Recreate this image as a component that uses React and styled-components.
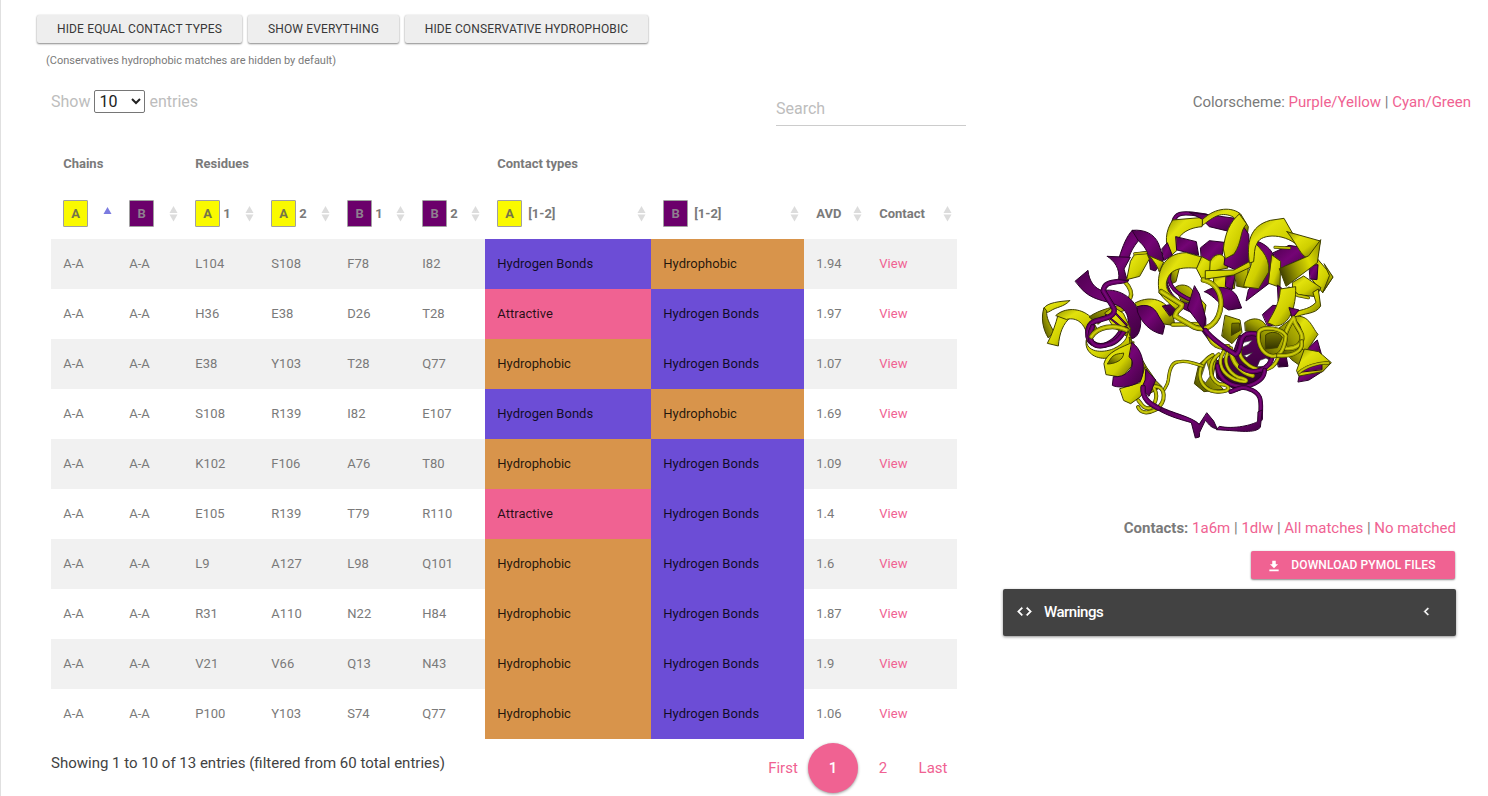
import React from "react";
import styled, { createGlobalStyle, css } from "styled-components";

const PINK = "#f06292";

const GlobalStyle = createGlobalStyle`
  * { box-sizing: border-box; }
  body {
    margin: 0;
    background: #fff;
    color: #7a7a7a;
    font-family: Roboto, "Liberation Sans", sans-serif;
    font-size: 15px;
    overflow: hidden;
  }
`;

const Page = styled.div`
  display: flex;
  height: 796px;
  border-left: 1px solid #e0e0e0;
`;

const Matches = styled.main`
  width: 965px;
  padding: 15px 0 0 36px;
`;

const Toolbar = styled.div`
  display: flex;
  gap: 6px;
`;

const Button = styled.button`
  display: flex;
  align-items: center;
  justify-content: center;
  width: ${(p) => p.$width}px;
  height: 28px;
  padding: ${(p) => (p.$primary ? "0 3px 0 0" : "0")};
  border: 0;
  border-radius: 2px;
  background: ${(p) => (p.$primary ? PINK : "#eeeeee")};
  color: ${(p) => (p.$primary ? "#fff" : "#383838")};
  font: ${(p) => (p.$primary ? 500 : 400)} 12px/28px Roboto, sans-serif;
  letter-spacing: ${(p) => (p.$primary ? 0.12 : 0.14)}px;
  text-transform: uppercase;
  white-space: nowrap;
  box-shadow: 0 1px 2px rgba(0, 0, 0, 0.45), 0 0 2px rgba(0, 0, 0, 0.1);
`;

const Hint = styled.p`
  margin: 10px 0 0 9px;
  font-size: 11px;
  line-height: 16px;
`;

const Controls = styled.div`
  display: flex;
  justify-content: space-between;
  width: 915px;
  height: 70px;
  margin: 0 0 0 14px;
  color: #bdbdbd;
  font-size: 16px;
`;

const Length = styled.label`
  display: flex;
  align-items: center;
  gap: 4px;
  height: 23px;
  margin-top: 21px;
`;

const LengthSelect = styled.select`
  width: 51px;
  height: 23px;
  padding: 0;
  border: 1px solid #767676;
  border-radius: 2px;
  background: #fff;
  color: #212121;
  font: 16px Roboto, sans-serif;
`;

const SearchInput = styled.input`
  width: 190px;
  height: 35px;
  margin-top: 22px;
  padding: 0;
  border: 0;
  border-bottom: 1px solid #ccc;
  outline: 0;
  font: 16px Roboto, sans-serif;
  &::placeholder { color: #bdbdbd; opacity: 1; }
`;

const Table = styled.table`
  width: 906px;
  margin-left: 14px;
  border-collapse: collapse;
  table-layout: fixed;
  font-size: 13px;
  line-height: 20px;
`;

const Row = styled.tr`
  height: 50px;
  background: ${(p) => (p.$striped ? "#f1f1f1" : "#fff")};
`;

const GroupHead = styled.th`
  padding: 0 12.2px;
  text-align: left;
  font-weight: 700;
`;

const Head = styled.th`
  padding: 0 5px 0 12.2px;
  text-align: left;
  font-weight: 700;
`;

const HeadContent = styled.div`
  display: flex;
  align-items: center;
  gap: ${(p) => p.$gap}px;
`;

const Chain = styled.span`
  width: 25px;
  height: 27px;
  margin-bottom: 1px;
  border: 1px solid #a0a0a0;
  border-radius: 1px;
  background: ${(p) => (p.$name === "A" ? "#fafa00" : "#6b006b")};
  color: ${(p) => (p.$name === "A" ? "#757548" : "#8f7f8f")};
  line-height: 25px;
  text-align: center;
`;

const SortIcon = styled.svg`
  margin-left: auto;
  width: 9px;
  height: 16px;
`;

const contactColors = {
  "Hydrogen Bonds": "#6c4dd6",
  Hydrophobic: "#d8944b",
  Attractive: PINK,
};

const Cell = styled.td`
  padding: 0 12.3px;
  ${(p) =>
    p.$contact &&
    css`
      background: ${contactColors[p.$contact]};
      color: rgba(0, 0, 0, 0.85);
      letter-spacing: 0.01px;
    `}
`;

const Link = styled.a`
  color: ${PINK};
  cursor: pointer;
`;

const TableFooter = styled.div`
  display: flex;
  justify-content: space-between;
  width: 907px;
  margin: 4px 0 0 14px;
`;

const Info = styled.div`
  padding-top: 10px;
  color: #424242;
  line-height: 20px;
`;

const Pager = styled.div`
  display: flex;
`;

const PageLink = styled.a`
  width: 50px;
  height: 50px;
  border-radius: 50%;
  color: ${PINK};
  line-height: 50px;
  text-align: center;
  ${(p) =>
    p.$current &&
    css`
      background: ${PINK};
      color: #fff;
      font-weight: 500;
      box-shadow: 0 1px 3px rgba(0, 0, 0, 0.4);
    `}
`;

const Structure = styled.aside`
  display: flex;
  flex-direction: column;
  align-items: flex-end;
  width: 505px;
  padding-top: 92px;
`;

const Scheme = styled.div`
  text-align: right;
  line-height: 20px;
  white-space: nowrap;
`;

const Viewer = styled.div`
  width: 453px;
  height: 406px;
  margin-right: 15px;
  padding: 88px 0 0 27px;
`;

const SidePanel = styled.div`
  display: flex;
  flex-direction: column;
  align-items: flex-end;
  width: 453px;
  margin-right: 15px;
`;

const Contacts = styled.div`
  margin-bottom: 13px;
  line-height: 20px;
`;

const DownloadRow = styled.div`
  padding-right: 1px;
`;

const ButtonIcon = styled.svg`
  width: 14px;
  height: 14px;
  margin: 1px 10px 0 0;
`;

const Warnings = styled.button`
  display: flex;
  align-items: center;
  width: 453px;
  height: 47px;
  margin-top: 10px;
  padding: 0 22px 2px 13px;
  border: 0;
  border-radius: 2px;
  background: #424242;
  color: #fff;
  font: 500 15px Roboto, sans-serif;
  letter-spacing: -0.5px;
  box-shadow: 0 1px 3px rgba(0, 0, 0, 0.45);
  span { flex: 1; margin-left: 11px; text-align: left; }
`;

function Sort({ active }) {
  return (
    <SortIcon viewBox="0 0 9 16">
      <path d={active ? "M4.5 1 8.5 8h-8z" : "M4.5 0 8.5 7h-8z"} fill={active ? "#7b7be0" : "#dcdcdc"} />
      {!active && <path d="M4.5 15.5.5 8.5h8z" fill="#dcdcdc" />}
    </SortIcon>
  );
}

const columns = [
  { width: 66, chain: "A", active: true },
  { width: 66, chain: "B" },
  { width: 76, chain: "A", label: "1" },
  { width: 76, chain: "A", label: "2" },
  { width: 75, chain: "B", label: "1" },
  { width: 75, chain: "B", label: "2" },
  { width: 166, chain: "A", label: "[1-2]" },
  { width: 153, chain: "B", label: "[1-2]" },
  { width: 63, label: "AVD" },
  { width: 90, label: "Contact" },
];

const HB = "Hydrogen Bonds";
const HP = "Hydrophobic";
const AT = "Attractive";

const rows = [
  ["L104", "S108", "F78", "I82", HB, HP, "1.94"],
  ["H36", "E38", "D26", "T28", AT, HB, "1.97"],
  ["E38", "Y103", "T28", "Q77", HP, HB, "1.07"],
  ["S108", "R139", "I82", "E107", HB, HP, "1.69"],
  ["K102", "F106", "A76", "T80", HP, HB, "1.09"],
  ["E105", "R139", "T79", "R110", AT, HB, "1.4"],
  ["L9", "A127", "L98", "Q101", HP, HB, "1.6"],
  ["R31", "A110", "N22", "H84", HP, HB, "1.87"],
  ["V21", "V66", "Q13", "N43", HP, HB, "1.9"],
  ["P100", "Y103", "S74", "Q77", HP, HB, "1.06"],
];

const tubeTones = {
  y: ["#2e2e00", "#a5a500", "#d2d210"],
  p: ["#1c001c", "#5c005d", "#780679"],
};

// Ribbon and tube segments, listed from the back of the molecule to the front.
const segments = [
  // left terminal strand
  ["y", "M119 302C88 304 53 308 42 324C36 336 48 342 61 333C80 320 101 322 119 302Z"],
  ["yd", "M42 324C32 350 38 388 55 414L72 396C59 372 48 352 50 334Z"],
  ["y", "M84 345C77 372 67 402 52 430L85 438C88 400 99 370 122 352Z"],
  ["y", "M78 346C102 323 150 321 182 351L203 390L172 408C165 372 142 350 110 358Z"],
  ["yd", "M178 350C210 328 250 320 300 309L304 325C255 340 232 348 205 372Z"],
  ["yt", "M284 244C300 262 307 280 301 293C290 304 270 303 252 310", 10],
  ["p", "M136 243L174 211C177 244 194 266 218 272C270 262 326 300 332 360C334 390 322 415 304 416L290 384C302 352 288 328 262 316C224 300 184 302 152 264Z"],
  ["y", "M225 338L250 320L280 340L302 386L298 415L250 380Z"],
  ["pt", "M228 345L278 385M252 335L290 375", 3],
  ["pt", "M289 239C261 250 222 240 220 273L252 326C258 350 225 355 196 363C165 375 169 420 188 430C216 447 250 430 270 400", 13],
  ["p", "M268 171C278 139 290 108 307 91L346 102C326 118 300 150 294 183Z"],
  ["p", "M307 91C345 87 374 103 386 132L401 177L376 213L361 208C358 164 350 143 326 123Z"],
  ["p", "M232 169L301 172L282 207L292 242L266 239C270 205 254 184 232 169Z"],
  ["y", "M317 159L348 155L358 177L329 229L290 239L301 185Z"],
  ["yt", "M314 161L348 158", 6],
  ["y", "M357 167L401 186L388 216C380 193 369 181 357 167Z"],
  ["y", "M315 309C366 280 430 303 434 377L376 368C366 331 349 318 322 320Z"],
  ["p", "M322 320C350 310 373 319 386 348L404 377L398 403C358 395 335 366 323 337Z"],
  ["pd", "M398 318L442 310L440 334L420 348Z"],

  // upper middle helices
  ["pt", "M431 64C437 40 456 38 485 41L528 47", 10],
  ["y", "M428 60L521 52L516 80C465 84 433 112 441 151L422 168C402 133 406 91 428 60Z"],
  ["p", "M396 146L412 128L427 166L402 181Z"],
  ["p", "M438 110L499 125L506 166L441 150Z"],
  ["p", "M512 143L538 122L583 127L577 164L552 169L542 201L514 172Z"],
  ["p", "M478 37L555 47L617 55L613 98L538 80L515 57Z"],
  ["y", "M518 58C558 20 607 21 632 42L655 80L652 104L610 51C575 34 553 48 518 76Z"],
  ["yd", "M427 205L448 204L438 245L423 252Z"],
  ["yd", "M436 262C450 250 478 252 491 276L480 308L456 306Z"],
  ["p", "M410 213C405 258 428 300 472 311L503 300L510 350L460 326C422 304 405 270 410 213Z"],
  ["pt", "M420 208C403 264 453 286 486 302", 9],
  ["y", "M388 279C376 218 400 158 469 158L515 171L505 205C450 200 416 207 409 249C405 279 440 295 461 312L440 330C422 315 403 299 388 279Z"],
  ["y", "M516 170L547 187L541 235L518 242L500 207Z"],
  ["y", "M541 184C551 160 576 158 584 174L594 204L540 215Z"],
  ["y", "M551 231L612 229L614 265L583 270L553 264Z"],
  ["p", "M589 230L616 224L606 269L587 260Z"],
  ["p", "M524 275C552 255 605 256 622 291L635 324L596 330C572 318 553 287 524 275Z"],
  ["y", "M500 285L528 315L522 349L502 326Z"],
  ["yt", "M428 374L510 372", 10],
  ["pt", "M521 357L521 388L548 425L604 455", 13],
  ["yt", "M520 240C553 246 574 276 573 314C568 370 531 396 494 382L435 348C443 320 455 331 456 314L394 275", 13],
  ["p", "M494 258L508 282L527 354L520 388L473 325Z"],
  ["p", "M628 62L656 103L661 182L620 211L582 194L585 170L611 164C627 130 629 96 628 62Z"],
  ["y", "M628 42L650 72C628 92 638 126 612 162L586 176L580 147C585 100 600 65 628 42Z"],
  ["yd", "M614 215L655 200L650 264L620 258Z"],
  ["y", "M527 212L612 210L660 184L661 202L611 225L527 237Z"],

  // upper right helices
  ["p", "M668 121C705 125 745 162 728 193L720 248L648 303L655 270L689 228Z"],
  ["y", "M662 112C681 142 721 161 716 216L686 266L641 260C649 213 682 192 662 112Z"],
  ["y", "M658 188C650 132 657 78 721 61L762 55L790 104L813 146C771 98 693 99 681 130C672 143 674 164 671 184Z"],
  ["p", "M730 158L777 136L816 142L833 168L763 199L748 219Z"],
  ["y", "M726 165L752 184L750 262L716 250Z"],
  ["yt", "M735 142L779 144", 6],
  ["y", "M861 175L909 231L878 278L846 239Z"],
  ["p", "M838 196L864 194L861 239L841 237Z"],
  ["yd", "M883 192L909 231L878 278L898 228Z"],
  ["y", "M788 247L821 228L873 263L858 290L790 282Z"],
  ["y", "M771 95L871 123L863 166L832 173C813 169 802 134 771 95Z"],
  ["fold", "M872 120L862 188L768 259L748 206L835 168Z"],
  ["yt", "M777 265L802 286L835 293", 7],
  ["y", "M865 268L872 318C856 345 823 337 791 354L779 344C807 326 834 333 858 307L849 278Z"],
  ["p", "M743 256L755 264L752 318L745 304Z"],
  ["p", "M698 343L728 316L764 318L739 373L714 379Z"],
  ["y", "M751 267L797 260C799 322 778 377 736 378L713 368C728 342 749 310 751 267Z"],
  ["p", "M778 323L807 330L788 353Z"],

  // lower right helices
  ["p", "M805 360L833 378L825 435L796 440Z"],
  ["p", "M831 446L862 420L875 465L842 468Z"],
  ["yd", "M772 462L806 440L832 446L814 500L786 480Z"],
  ["y", "M786 352C836 336 845 382 864 403L828 455L803 439C824 392 814 373 786 352Z"],
  ["p", "M804 545L814 494L874 491L881 512L837 540Z"],
  ["y", "M800 511L823 447L866 455L904 488L878 515L808 528Z"],
  ["p", "M812 516C828 500 855 492 876 492L876 508Z"],
  ["yt", "M807 518C824 501 864 487 895 489", 7],
  ["pd", "M740 476L767 461L774 499L746 501Z"],
  ["yd", "M586 346L630 360L636 397L606 431L576 409Z"],
  ["ydark", "M607 370L628 369L631 391L605 406Z"],
  ["yd", "M645 367C674 346 704 359 711 385L690 396L647 393Z"],
  ["yd", "M742 388L790 352L817 401L812 455L760 462Z"],
  ["yt", "M791 354C768 387 755 418 766 445C795 448 821 434 815 405C808 384 793 375 791 354Z", 12],
  ["yt", "M538 408C545 432 568 446 594 440", 13],
  ["pd", "M608 463L627 407L690 398L729 433L726 484L689 546L622 573L561 535L554 486Z"],
  ["hole", "M642 427L667 421L654 434L633 444Z"],
  ["hole", "M641 467L667 458L651 472Z"],
  ["hole", "M690 481L708 474L721 482L703 499L682 500Z"],
  ["yd", "M544 463L561 471L548 533L580 568L522 575L493 551L506 494Z"],
  ["hole", "M529 485L512 536L527 548L542 526Z"],
  ["hole", "M524 557L537 561L528 568Z"],
  ["yt", "M548 465C484 500 507 574 562 575C610 577 601 551 568 553C533 535 535 485 566 463", 9],
  ["yt", "M581 455C556 493 582 524 615 539C651 551 665 540 625 532C590 515 579 482 595 455", 9],
  ["yt", "M602 446C603 487 635 521 668 527", 12],
  ["yt", "M633 443C617 470 661 511 700 509C727 507 741 488 747 465", 9],
  ["pt", "M526 391C548 420 584 443 617 464C640 451 623 413 650 402C689 393 725 423 727 465C724 510 667 529 632 500", 12],
  ["pt", "M562 497C568 544 607 562 651 559C689 548 704 529 704 510", 11],
  ["yd", "M694 389C721 374 762 388 769 410L749 467L714 468L689 436Z"],
  ["ydark", "M708 404C725 391 748 397 757 412L742 443L707 447Z"],
  ["yt", "M687 395C701 376 757 386 768 408C762 456 746 472 724 468C691 459 681 424 687 395Z", 10],
  ["yt", "M744 467C793 470 820 451 815 424", 10],

  // bottom loop
  ["yt", "M403 568C411 553 413 553 415 540C418 509 424 488 443 486C467 480 487 489 518 498", 7],
  ["pt", "M602 575C624 567 635 558 655 566C705 580 690 618 692 656", 11],
  ["p", "M685 635L697 630L691 682C675 701 634 693 559 689L568 679C612 689 670 674 682 665Z"],
  ["p", "M531 639L551 663L562 687C540 684 533 667 526 661L509 697L508 711L496 714L484 668C458 660 415 650 379 627L389 619C424 639 486 650 507 672Z"],

  // left helix
  ["pt", "M188 380C168 420 190 448 232 434C264 427 276 405 287 386", 12],
  ["yt", "M184 410C202 381 251 370 291 391", 12],
  ["y", "M169 420C168 456 215 461 251 446C282 431 292 416 294 392L309 432C295 464 266 473 224 475C188 475 162 450 169 420Z"],
  ["yd", "M298 412L318 446L350 502L378 542L396 560L360 580L312 520Z"],
  ["y", "M222 490C229 456 275 442 312 425L304 500L276 532L229 524Z"],
  ["yd", "M240 479C251 459 269 462 281 459C281 481 253 492 233 492Z"],
  ["y", "M270 566L330 548L345 500L366 539L330 591L302 611L282 602Z"],
  ["p", "M306 428C341 449 349 512 330 544C299 565 258 563 247 556L250 530C294 535 324 490 298 471Z"],
  ["yt", "M369 560C387 585 377 611 361 624C342 629 334 613 325 601M372 559C409 557 411 606 377 629C353 641 333 641 324 621", 9],
  ["p", "M348 508L377 540L357 589L334 567L345 541Z"],
  ["pt", "M339 562C336 598 362 613 386 625", 13],
];

function Protein() {
  return (
    <svg width="310" height="245" viewBox="0 0 930 735" strokeLinejoin="round" strokeLinecap="round">
      <defs>
        <linearGradient id="y" x1="0" y1="0" x2="1" y2="1">
          <stop offset="0" stopColor="#929200" />
          <stop offset=".3" stopColor="#e2e20c" />
          <stop offset=".6" stopColor="#cfcf00" />
          <stop offset="1" stopColor="#5f5f00" />
        </linearGradient>
        <linearGradient id="yd" x1="0" y1="1" x2="1" y2="0">
          <stop offset="0" stopColor="#444400" />
          <stop offset=".5" stopColor="#9a9a00" />
          <stop offset="1" stopColor="#d0d000" />
        </linearGradient>
        <linearGradient id="fold" x1="0" y1=".7" x2="1" y2=".3">
          <stop offset="0" stopColor="#3c3c00" />
          <stop offset=".4" stopColor="#a0a000" />
          <stop offset=".7" stopColor="#dcdc00" />
          <stop offset="1" stopColor="#a4a400" />
        </linearGradient>
        <linearGradient id="ydark" x1="0" y1="0" x2="0" y2="1">
          <stop offset="0" stopColor="#777700" />
          <stop offset="1" stopColor="#333300" />
        </linearGradient>
        <linearGradient id="p" x1="0" y1="0" x2="1" y2="1">
          <stop offset="0" stopColor="#4e004f" />
          <stop offset=".45" stopColor="#740475" />
          <stop offset="1" stopColor="#400041" />
        </linearGradient>
        <linearGradient id="pd" x1="0" y1="0" x2="0" y2="1">
          <stop offset="0" stopColor="#5b005c" />
          <stop offset="1" stopColor="#300031" />
        </linearGradient>
      </defs>
      {segments.map(([kind, d, width], i) => {
        if (kind === "hole") return <path key={i} d={d} fill="#fff" stroke="#333" strokeWidth="2" />;
        if (width) {
          const [edge, body, light] = tubeTones[kind[0]];
          return (
            <g key={i} fill="none">
              <path d={d} stroke={edge} strokeWidth={width + 3} />
              <path d={d} stroke={body} strokeWidth={width} />
              <path d={d} stroke={light} strokeWidth={width * 0.4} />
            </g>
          );
        }
        return <path key={i} d={d} fill={`url(#${kind})`} stroke={kind[0] === "p" ? "#2a002a" : "#404000"} strokeWidth="3" />;
      })}
    </svg>
  );
}

export default function App() {
  return (
    <>
      <GlobalStyle />
      <Page>
        <Matches>
          <Toolbar>
            <Button $width={205}>Hide equal contact types</Button>
            <Button $width={151}>Show everything</Button>
            <Button $width={243}>Hide conservative hydrophobic</Button>
          </Toolbar>
          <Hint>(Conservatives hydrophobic matches are hidden by default)</Hint>
          <Controls>
            <Length>
              Show
              <LengthSelect defaultValue="10">
                <option>10</option>
                <option>25</option>
              </LengthSelect>
              entries
            </Length>
            <SearchInput placeholder="Search" />
          </Controls>
          <Table>
            <colgroup>
              {columns.map((c, i) => (
                <col key={i} width={c.width} />
              ))}
            </colgroup>
            <thead>
              <Row>
                <GroupHead colSpan={2}>Chains</GroupHead>
                <GroupHead colSpan={4}>Residues</GroupHead>
                <GroupHead colSpan={4}>Contact types</GroupHead>
              </Row>
              <Row>
                {columns.map((c, i) => (
                  <Head key={i}>
                    <HeadContent $gap={c.label === "[1-2]" ? 6 : 3}>
                      {c.chain && <Chain $name={c.chain}>{c.chain}</Chain>}
                      {c.label}
                      <Sort active={c.active} />
                    </HeadContent>
                  </Head>
                ))}
              </Row>
            </thead>
            <tbody>
              {rows.map((r, i) => (
                <Row key={i} $striped={i % 2 === 0}>
                  <Cell>A-A</Cell>
                  <Cell>A-A</Cell>
                  {r.map((v, j) => (
                    <Cell key={j} $contact={j === 4 || j === 5 ? v : undefined}>{v}</Cell>
                  ))}
                  <Cell><Link>View</Link></Cell>
                </Row>
              ))}
            </tbody>
          </Table>
          <TableFooter>
            <Info>Showing 1 to 10 of 13 entries (filtered from 60 total entries)</Info>
            <Pager>
              <PageLink>First</PageLink>
              <PageLink $current>1</PageLink>
              <PageLink>2</PageLink>
              <PageLink>Last</PageLink>
            </Pager>
          </TableFooter>
        </Matches>
        <Structure>
          <Scheme>
            Colorscheme: <Link>Purple/Yellow</Link> | <Link>Cyan/Green</Link>
          </Scheme>
          <Viewer>
            <Protein />
          </Viewer>
          <SidePanel>
            <Contacts>
              <b>Contacts:</b> <Link>1a6m</Link> | <Link>1dlw</Link> | <Link>All matches</Link> | <Link>No matched</Link>
            </Contacts>
            <DownloadRow>
              <Button $primary $width={204}>
                <ButtonIcon viewBox="0 0 24 24">
                  <path d="M19 9h-4V3H9v6H5l7 7zM4 18v3h16v-3z" fill="#fff" />
                </ButtonIcon>
                Download pymol files
              </Button>
            </DownloadRow>
            <Warnings>
              <svg width="17" height="17" viewBox="0 0 24 24" fill="#fff" stroke="#fff" strokeWidth="0.8">
                <path d="M9.4 16.6 4.8 12l4.6-4.6L8 6l-6 6 6 6zm5.2 0 4.6-4.6-4.6-4.6L16 6l6 6-6 6z" />
              </svg>
              <span>Warnings</span>
              <svg width="15" height="15" viewBox="0 0 24 24" fill="#fff" stroke="#fff" strokeWidth="0.8">
                <path d="M15.4 7.4 14 6l-6 6 6 6 1.4-1.4-4.6-4.6z" />
              </svg>
            </Warnings>
          </SidePanel>
        </Structure>
      </Page>
    </>
  );
}
